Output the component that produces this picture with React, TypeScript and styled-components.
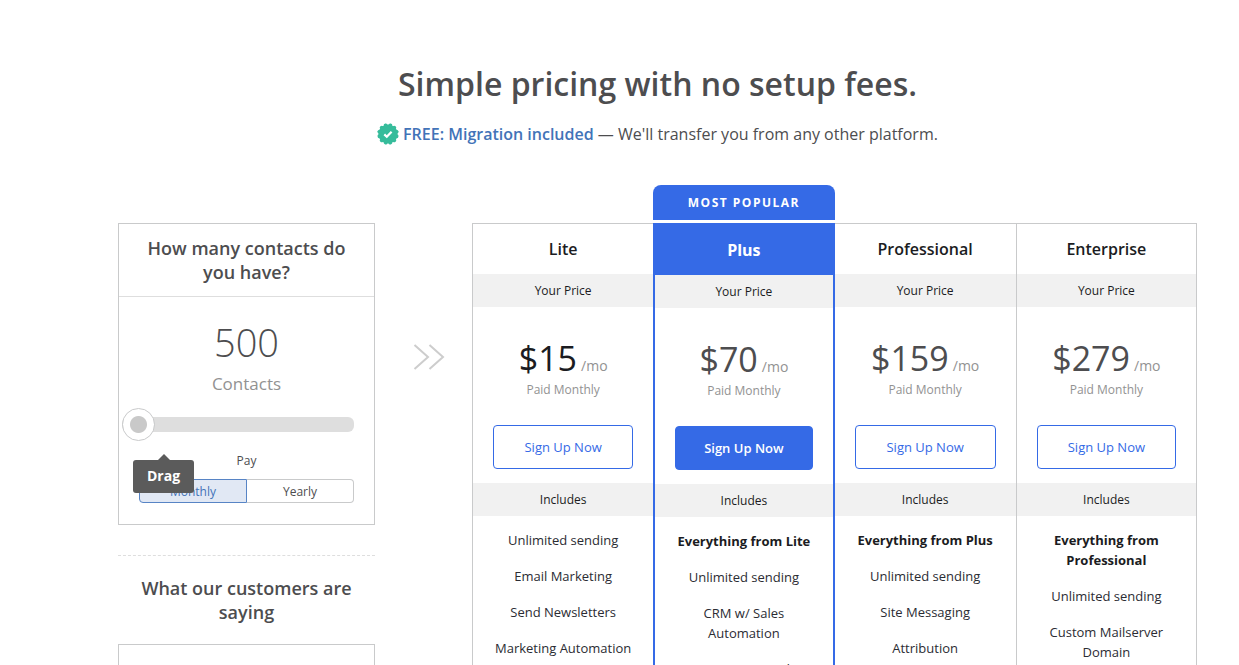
import React, { useState } from "react";
import styled, { createGlobalStyle, css } from "styled-components";

const blue = "#356ae6";
const line = "#c9cacb";

const GlobalStyle = createGlobalStyle`
  *, *::before, *::after { box-sizing: border-box; }
  body {
    margin: 0;
    background: #fff;
    color: #4d4d4f;
    font-family: "Open Sans", "Noto Sans", sans-serif;
    font-size: 13px;
    line-height: 20px;
  }
  h1, h2, h3, p, ul { margin: 0; padding: 0; }
  button, input { font: inherit; margin: 0; }
`;

const Page = styled.main`
  padding: 60px 42px 0 118px;
`;

const Intro = styled.header`
  display: flex;
  flex-direction: column;
  align-items: center;
  gap: 14px;
  margin-bottom: 77px;
  text-align: center;
`;

const Title = styled.h1`
  font-size: 32px;
  line-height: 48px;
  font-weight: 600;
`;

const Subtitle = styled.p`
  display: flex;
  align-items: center;
  gap: 4px;
  font-size: 16px;
  line-height: 24px;
`;

const MigrationLink = styled.a`
  color: #4273b8;
  font-weight: 600;
  text-decoration: none;
`;

const Columns = styled.div`
  display: grid;
  grid-template-columns: 257px 97px minmax(0, 1fr);
  align-items: start;
`;

const Sidebar = styled.aside`
  display: flex;
  flex-direction: column;
`;

const Panel = styled.section`
  border: 1px solid ${line};
  text-align: center;
`;

const PanelTitle = styled.h2`
  padding: 12px 20px;
  border-bottom: 1px solid #dedede;
  font-size: 18px;
  line-height: 24px;
  font-weight: 600;
`;

const PanelBody = styled.div`
  padding: 20px 20px 21px;
`;

const Count = styled.output`
  display: block;
  margin-bottom: 4px;
  font-size: 38px;
  line-height: 50px;
  font-weight: 300;
`;

const CountLabel = styled.label`
  display: block;
  color: #929292;
  font-size: 17px;
  line-height: 26px;
`;

const SliderWrap = styled.div`
  position: relative;
  display: flex;
  margin: 11px 0 10px -17px;
`;

const thumb = css`
  width: 33px;
  height: 33px;
  border: 1px solid ${line};
  border-radius: 50%;
  background: radial-gradient(circle, #c9c9c9 8px, #fff 9px);
  cursor: pointer;
`;

const track = css`
  height: 15px;
  border-radius: 6px;
  background: #dedede;
`;

const Slider = styled.input`
  appearance: none;
  width: 100%;
  height: 33px;
  background: transparent;
  &::-webkit-slider-runnable-track { ${track} }
  &::-webkit-slider-thumb { appearance: none; margin-top: -9px; ${thumb} }
  &::-moz-range-track { ${track} }
  &::-moz-range-thumb { ${thumb} }
`;

const Tooltip = styled.span`
  position: absolute;
  z-index: 1;
  top: 52px;
  left: 11px;
  padding: 6px 14px 7px;
  border-radius: 3px;
  background: #5b5b5b;
  color: #fff;
  font-size: 14px;
  line-height: 20px;
  font-weight: 700;
  &::before {
    content: "";
    position: absolute;
    bottom: 100%;
    left: 50%;
    margin-left: -6px;
    border: 6px solid transparent;
    border-top-width: 0;
    border-bottom-color: #5b5b5b;
  }
`;

const PayLabel = styled.p`
  margin-bottom: 8px;
  font-size: 12px;
  line-height: 20px;
`;

const Toggle = styled.div`
  display: flex;
`;

const ToggleButton = styled.button<{ $active: boolean }>`
  flex: 1;
  height: 24px;
  padding: 1px 0 0;
  border: 1px solid ${(p) => (p.$active ? "#5784c5" : line)};
  background: ${(p) => (p.$active ? "#e1e8f4" : "#fff")};
  color: ${(p) => (p.$active ? "#4273b8" : "#4d4d4f")};
  font-size: 12px;
  line-height: 20px;
  cursor: pointer;
  &:first-child { border-radius: 4px 0 0 4px; }
  &:last-child { border-radius: 0 4px 4px 0; border-left-width: 0; }
`;

const Customers = styled.section`
  margin-top: 30px;
  padding-top: 20px;
  border-top: 1px dashed #dedede;
  text-align: center;
`;

const CustomersTitle = styled.h2`
  margin-bottom: 20px;
  padding: 0 20px;
  font-size: 18px;
  line-height: 24px;
  font-weight: 600;
`;

const Quote = styled.div`
  min-height: 160px;
  border: 1px solid ${line};
`;

const Arrows = styled.svg`
  margin: 120px 0 0 38px;
  width: 32px;
  height: 28px;
`;

const Plans = styled.div`
  display: grid;
  grid-template-columns: repeat(4, minmax(0, 1fr));
  align-self: stretch;
`;

const PlanName = styled.h2`
  color: #1b1c22;
  font-size: 16px;
  line-height: 50px;
  font-weight: 600;
`;

const Plan = styled.article<{ $popular?: boolean }>`
  position: relative;
  text-align: center;
  color: #1b1c22;
  border-top: 1px solid ${line};
  &:first-child, &:last-child { border-left: 1px solid ${line}; }
  &:last-child { border-right: 1px solid ${line}; }
  ${(p) =>
    p.$popular &&
    css`
      border: 2px solid ${blue};
      ${PlanName} {
        background: ${blue};
        color: #fff;
        font-weight: 700;
      }
    `}
`;

const Ribbon = styled.p`
  position: absolute;
  bottom: 100%;
  left: -2px;
  right: -2px;
  margin-bottom: 5px;
  border-radius: 8px 8px 0 0;
  background: ${blue};
  color: #fff;
  font-size: 12px;
  line-height: 35px;
  font-weight: 700;
  letter-spacing: 1.5px;
`;

const Band = styled.h3`
  background: #f1f1f1;
  color: #1b1c22;
  font-size: 12px;
  line-height: 33px;
  font-weight: 400;
`;

const PriceBox = styled.div`
  display: flex;
  flex-direction: column;
  padding: 37px 20px 14px;
`;

const Price = styled.p<{ $dark?: boolean }>`
  color: ${(p) => (p.$dark ? "#1b1c22" : "#4d4d4f")};
  font-size: 34px;
  line-height: 28px;
  white-space: nowrap;
`;

const Per = styled.span`
  margin-left: 4px;
  color: #929292;
  font-size: 14px;
`;

const Terms = styled.p`
  margin-bottom: 25px;
  color: #929292;
  font-size: 12px;
  line-height: 20px;
`;

const SignUp = styled.button<{ $filled?: boolean }>`
  height: 44px;
  padding: 0;
  border: 1px solid ${blue};
  border-radius: 4px;
  background: ${(p) => (p.$filled ? blue : "#fff")};
  color: ${(p) => (p.$filled ? "#fff" : blue)};
  font-size: 13px;
  font-weight: ${(p) => (p.$filled ? 600 : 400)};
  cursor: pointer;
`;

const Features = styled.ul`
  display: flex;
  flex-direction: column;
  gap: 16px;
  padding: 14px 20px;
  list-style: none;
`;

const Feature = styled.li<{ $lead?: boolean }>`
  color: ${(p) => (p.$lead ? "#1b1c22" : "#2b2c33")};
  font-size: 13px;
  line-height: 20px;
  font-weight: ${(p) => (p.$lead ? 700 : 400)};
`;

interface PlanInfo {
  name: string;
  monthly: number;
  lead?: string;
  features: string[];
  popular?: boolean;
}

const plans: PlanInfo[] = [
  {
    name: "Lite",
    monthly: 15,
    features: ["Unlimited sending", "Email Marketing", "Send Newsletters", "Marketing Automation"],
  },
  {
    name: "Plus",
    monthly: 70,
    lead: "Everything from Lite",
    features: ["Unlimited sending", "CRM w/ Sales Automation", "Contact & Lead Scoring"],
    popular: true,
  },
  {
    name: "Professional",
    monthly: 159,
    lead: "Everything from Plus",
    features: ["Unlimited sending", "Site Messaging", "Attribution"],
  },
  {
    name: "Enterprise",
    monthly: 279,
    lead: "Everything from Professional",
    features: ["Unlimited sending", "Custom Mailserver Domain"],
  },
];

const Seal = () => (
  <svg width="22" height="22" viewBox="0 0 22 22" aria-hidden="true">
    <g fill="#36bc9b">
      <circle cx="11" cy="11" r="9.6" />
      {Array.from({ length: 12 }, (_, i) => (
        <circle key={i} cx="11" cy="2.2" r="2" transform={`rotate(${i * 30 + 15} 11 11)`} />
      ))}
    </g>
    <path d="M7.3 11.4l2.5 2.4 4.8-5" fill="none" stroke="#fff" strokeWidth="2.2" />
  </svg>
);

export default function App() {
  const [contacts, setContacts] = useState(500);
  const [period, setPeriod] = useState("Monthly");

  return (
    <Page>
      <GlobalStyle />
      <Intro>
        <Title>Simple pricing with no setup fees.</Title>
        <Subtitle>
          <Seal />
          <span>
            <MigrationLink href="#migration">FREE: Migration included</MigrationLink> — We'll
            transfer you from any other platform.
          </span>
        </Subtitle>
      </Intro>
      <Columns>
        <Sidebar>
          <Panel>
            <PanelTitle>How many contacts do you have?</PanelTitle>
            <PanelBody>
              <Count htmlFor="contacts">{contacts}</Count>
              <CountLabel htmlFor="contacts">Contacts</CountLabel>
              <SliderWrap>
                <Slider
                  id="contacts"
                  type="range"
                  min={500}
                  max={100000}
                  step={500}
                  value={contacts}
                  onChange={(e) => setContacts(Number(e.target.value))}
                />
                <Tooltip role="tooltip">Drag</Tooltip>
              </SliderWrap>
              <PayLabel id="pay">Pay</PayLabel>
              <Toggle role="group" aria-labelledby="pay">
                {["Monthly", "Yearly"].map((name) => (
                  <ToggleButton
                    key={name}
                    type="button"
                    $active={period === name}
                    aria-pressed={period === name}
                    onClick={() => setPeriod(name)}
                  >
                    {name}
                  </ToggleButton>
                ))}
              </Toggle>
            </PanelBody>
          </Panel>
          <Customers>
            <CustomersTitle>What our customers are saying</CustomersTitle>
            <Quote />
          </Customers>
        </Sidebar>
        <Arrows viewBox="0 0 32 28" fill="none" stroke="#cdcdcd" strokeWidth="2" aria-hidden="true">
          <path d="M1.500 2l13.500 12L1.500 26M16.500 2L30 14 16.500 26" />
        </Arrows>
        <Plans>
          {plans.map((plan) => (
            <Plan key={plan.name} $popular={plan.popular}>
              {plan.popular && <Ribbon>MOST POPULAR</Ribbon>}
              <PlanName>{plan.name}</PlanName>
              <Band>Your Price</Band>
              <PriceBox>
                <Price $dark={plan.monthly < 50}>
                  ${plan.monthly}
                  <Per>/mo</Per>
                </Price>
                <Terms>Paid {period}</Terms>
                <SignUp type="button" $filled={plan.popular}>
                  Sign Up Now
                </SignUp>
              </PriceBox>
              <Band>Includes</Band>
              <Features>
                {plan.lead && <Feature $lead>{plan.lead}</Feature>}
                {plan.features.map((feature) => (
                  <Feature key={feature}>{feature}</Feature>
                ))}
              </Features>
            </Plan>
          ))}
        </Plans>
      </Columns>
    </Page>
  );
}
